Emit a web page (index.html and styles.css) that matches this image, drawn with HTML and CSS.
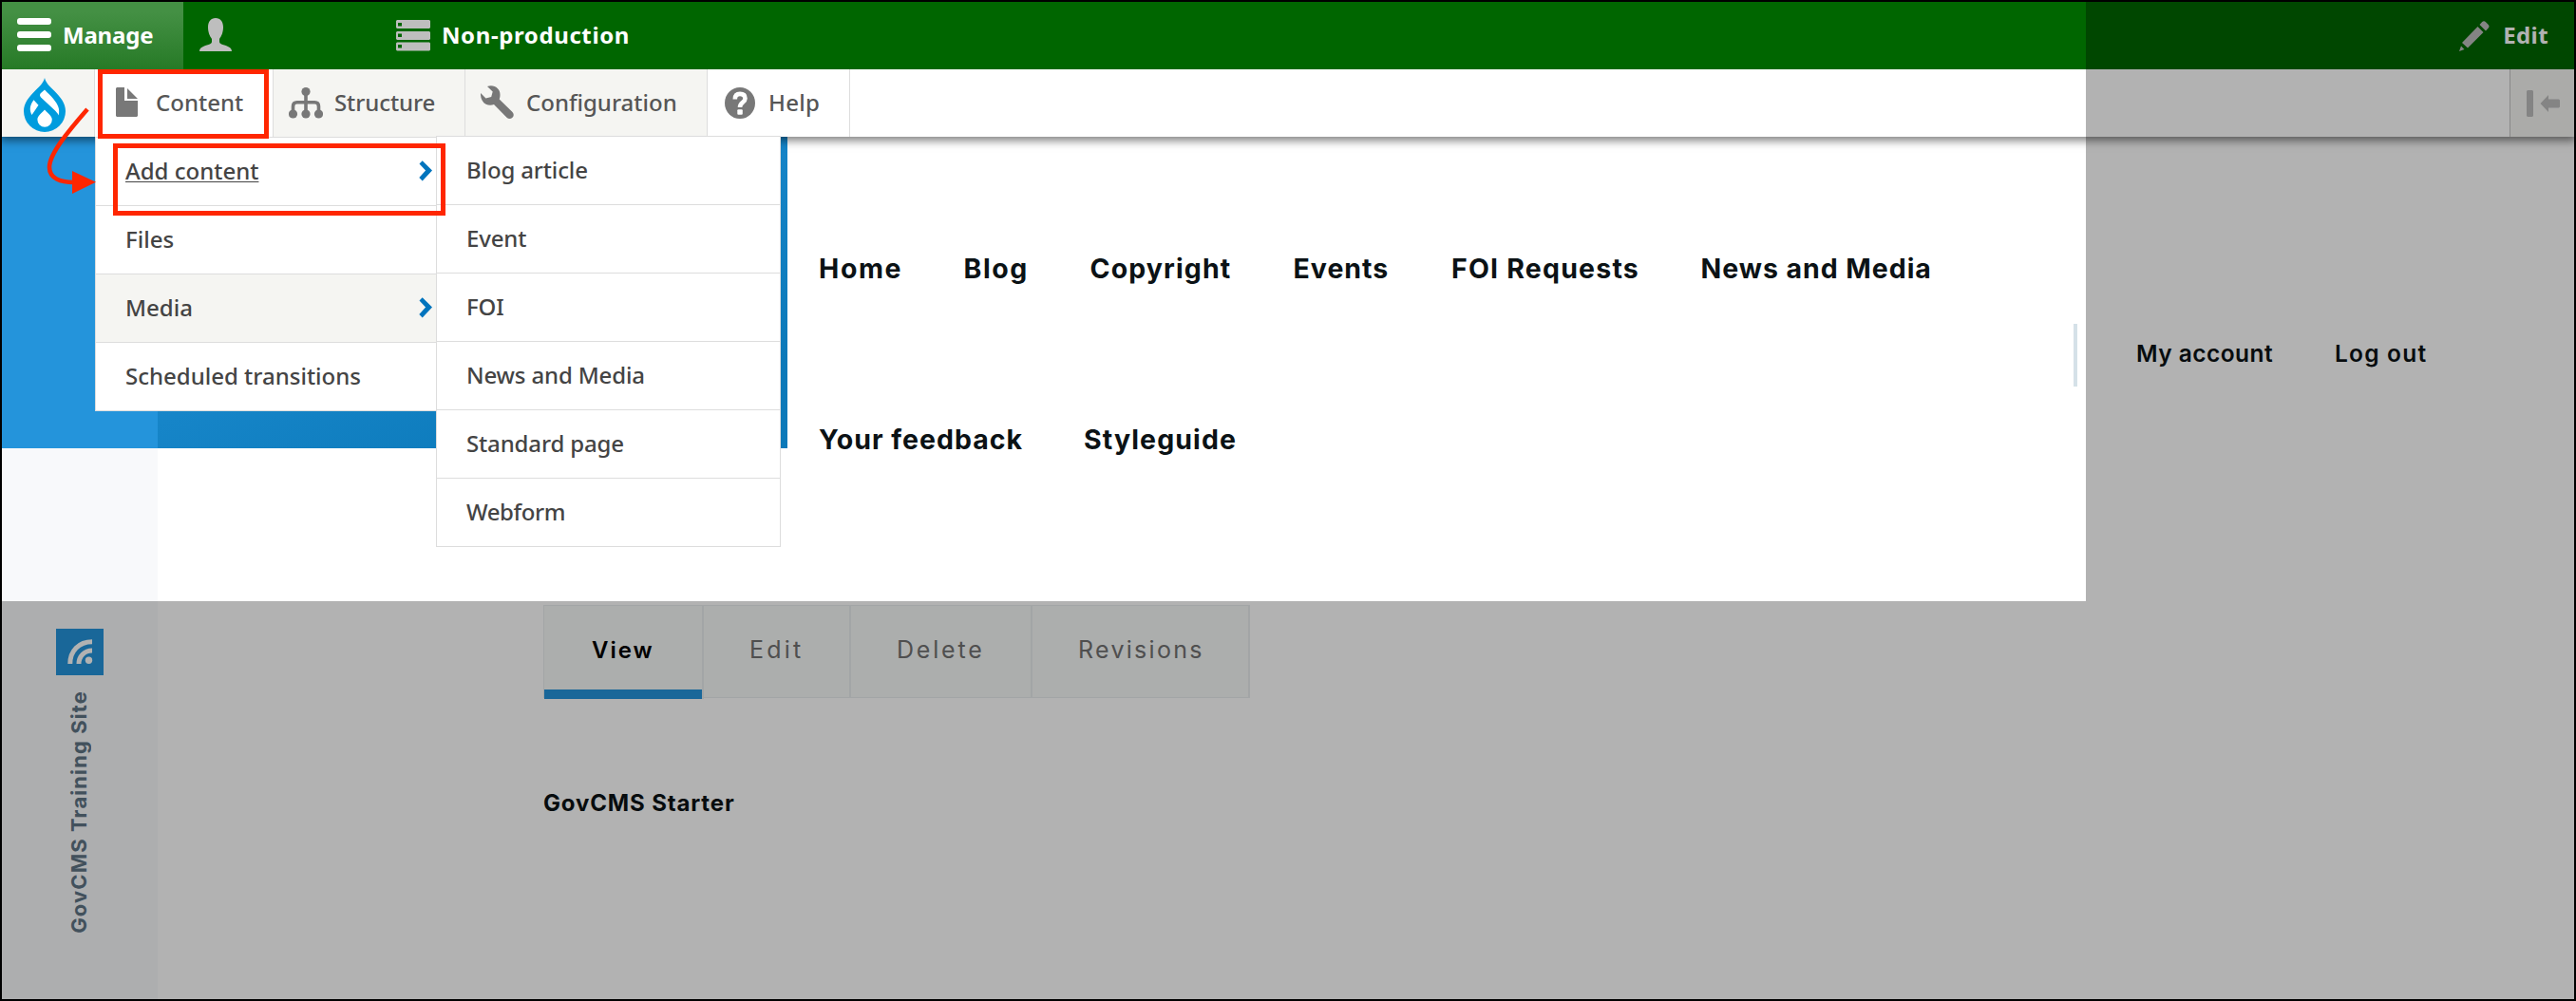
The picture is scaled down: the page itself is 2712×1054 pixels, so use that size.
FILE: index.html
```html
<!DOCTYPE html>
<html lang="en">
<head>
<meta charset="utf-8">
<title>GovCMS Training Site</title>
<link rel="stylesheet" href="styles.css">
</head>
<body>
<div class="frame">
  <header class="toolbar">
    <div class="bar">
      <a class="bar-manage">
        <svg width="36" height="36" viewBox="0 0 36 36"><g fill="#fff"><rect width="36" height="7" rx="3"/><rect y="14" width="36" height="7" rx="3"/><rect y="28" width="36" height="7" rx="3"/></g></svg>
        <span>Manage</span>
      </a>
      <a class="bar-user"><svg width="34" height="35" viewBox="0 0 34 35"><path fill="#bebebe" d="M17 0c5.200 0 8 4 8 9.500 0 6-2 9.500-4 12.500v3c0 1.600 1.500 2.300 3.500 3 4.500 1.500 9.500 2.500 9.500 7H0c0-4.500 5-5.500 9.500-7 2-.7 3.500-1.400 3.500-3v-3c-2-3-4-6.500-4-12.500C9 4 11.800 0 17 0z"/></svg></a>
      <a class="bar-env">
        <svg width="36" height="33" viewBox="0 0 36 33"><path fill="#bebebe" fill-rule="evenodd" d="M1 0h34l1 1v7l-1 1H1L0 8V1zM2 3v3.500h4V3zM1 12h34l1 1v7l-1 1H1l-1-1v-7zM2 14.500V18h4v-3.500zM1 23.500h34l1 1v7l-1 1H1l-1-1v-7zM2 26v3.500h4V26z"/></svg>
        <span>Non-production</span>
      </a>
      <a class="bar-edit">
        <svg width="32" height="32" viewBox="0 0 32 32"><path fill="#bebebe" d="M0 32l2-5.500L5.500 30zM3 23L19.500 6l6 6L9 28.500zM21.500 4L24 1.200q2-2 4 0l2.500 2.600q2 2 0 4L28 10.500z"/></svg>
        <span>Edit</span>
      </a>
    </div>
    <nav class="tray">
      <a class="tab tab-home"><svg width="44" height="57" viewBox="0 0 44 57"><path fill="#009cde" d="M22 0c-1.500 6-6 9.500-10 13.500C5.500 20 0 26.500 0 35a22 22 0 0 0 44 0c0-8.500-5.500-15-12-21.500C28 9.500 23.500 6 22 0z"/><g fill="#fff"><path d="M22 12.500c3 3.500 6.500 6 9.500 10 4 5 7 10 5.200 17-1-2.300-2.500-4-4.700-6L18 20.500q-2-2.500 0-4.500z"/><path d="M10.500 23.300l5 5.500-7 10.200C5.500 34 6.500 28.500 10.500 23.300z"/><path d="M22 33.500c3.500 4 7.800 6.300 7.800 10.500a7.700 7.700 0 0 1-15.400 0c0-4.200 4.100-6.500 7.600-10.500z"/></g></svg></a>
      <a class="tab tab-content"><svg width="23" height="31" viewBox="0 0 23 31"><path fill="#787878" d="M1 0h8v14h14v16l-1 1H1l-1-1V1zM12 1l11 11H12z"/></svg><span>Content</span></a>
      <a class="tab tab-structure"><svg width="36" height="33" viewBox="0 0 36 33"><g fill="#787878"><circle cx="18" cy="4.600" r="4.600"/><circle cx="4.500" cy="28" r="4.600"/><circle cx="18" cy="28" r="4.600"/><circle cx="31.500" cy="28" r="4.600"/></g><path fill="none" stroke="#787878" stroke-width="3.600" d="M18 4v24M4.500 28v-8q0-4.200 4.200-4.200h18.600q4.200 0 4.200 4.200v8"/></svg><span>Structure</span></a>
      <a class="tab tab-config"><svg width="35" height="36" viewBox="0 0 35 36"><path fill="#787878" d="M7 1c7-2.500 13.500 2 13.500 8.500 0 2-.2 3.500-.8 5L33.500 28q2.500 3 0 5.800-3 2.500-6 0L14 20C8 22.500-.5 19 0 8l5.500 5.500 5.700-1.500 1.500-5.500z"/></svg><span>Configuration</span></a>
      <a class="tab tab-help"><svg width="32" height="33" viewBox="0 0 32 33"><ellipse cx="16" cy="16.500" rx="16" ry="16.500" fill="#787878"/><path fill="none" stroke="#fff" stroke-width="4.600" d="M10.800 12.500c0-3.800 2-5.600 5.200-5.600 3.500 0 5.500 1.800 5.500 4.800 0 4.300-5.500 4-5.500 9.300"/><rect x="13.300" y="23.300" width="5.500" height="5.500" rx="1" fill="#fff"/></svg><span>Help</span></a>
      <a class="tab tab-orient"><svg width="36" height="28" viewBox="0 0 36 28"><path fill="#bebebe" d="M1 0h5l1 1v26l-1 1H1l-1-1V1zM14.500 14l8.500-9v4.500h11l1 1v7l-1 1H23V23z"/></svg></a>
    </nav>
  </header>

  <div class="page">
    <aside class="sidebar">
      <div class="sidebar-top"></div>
      <div class="sidebar-body">
        <div class="rss"><svg width="27" height="27" viewBox="0 0 27 27"><g fill="none" stroke="#fff"><path stroke-width="5" d="M2.800 26C2.800 12.500 12 2.800 26 2.800"/><path stroke-width="5" d="M12 26c0-8 6-14 14-14"/></g><circle cx="22.500" cy="22.300" r="3.700" fill="#fff"/></svg></div>
        <div class="site-name">GovCMS Training Site</div>
      </div>
    </aside>
    <main class="main">
      <div class="masthead">
        <div class="brand"></div>
        <nav class="nav">
          <a class="n-home">Home</a><a class="n-blog">Blog</a><a class="n-copyright">Copyright</a><a class="n-events">Events</a><a class="n-foi">FOI Requests</a><a class="n-news">News and Media</a><a class="n-feedback">Your feedback</a><a class="n-style">Styleguide</a>
        </nav>
        <div class="account"><a class="my-account">My account</a><a class="log-out">Log out</a></div>
      </div>
      <div class="tabs"><a class="t-view">View</a><a class="t-edit">Edit</a><a class="t-delete">Delete</a><a class="t-revisions">Revisions</a></div>
      <h1 class="title">GovCMS Starter</h1>
    </main>
  </div>

  <ul class="menu menu-content">
    <li class="current"><span>Add content</span><svg width="14" height="22" viewBox="0 0 14 22"><path fill="#0074bd" d="M.5 3.500L3.700.3 14 10.500 3.700 21.500.3 18l6.800-7.400z"/></svg></li>
    <li><span>Files</span></li>
    <li class="shaded"><span>Media</span><svg width="14" height="22" viewBox="0 0 14 22"><path fill="#0074bd" d="M.5 3.500L3.700.3 14 10.500 3.700 21.500.3 18l6.800-7.400z"/></svg></li>
    <li><span>Scheduled transitions</span></li>
  </ul>
  <ul class="menu menu-add">
    <li>Blog article</li><li>Event</li><li>FOI</li><li>News and Media</li><li>Standard page</li><li class="m-webform">Webform</li>
  </ul>

  <div class="spotlight"></div>
  <div class="mark mark-content"></div>
  <div class="mark mark-add"></div>
  <svg class="arrow" width="60" height="100" viewBox="0 0 60 100"><path fill="none" stroke="#ff2600" stroke-width="4.600" d="M48 10C28 33 8 57 8 71c0 12 12 16 26 16"/><path fill="#ff2600" d="M32 75l25 11.700L32 99z"/></svg>
</div>
</body>
</html>
```
FILE: styles.css
```css
* { box-sizing: border-box; }
body { margin: 0; background: #000; }
svg { display: block; flex: none; }

.frame {
  position: relative;
  width: 2712px;
  height: 1054px;
  border: 2px solid #000;
  background: #fff;
  overflow: hidden;
  font-family: "Noto Sans", sans-serif;
  font-size: 24px;
}

/* Admin toolbar */
.toolbar { position: relative; z-index: 2; }
.bar {
  position: relative;
  z-index: 1;
  display: flex;
  height: 71px;
  background: #006600;
  color: #fff;
  font-weight: 700;
  line-height: 69px;
}
.bar a { display: flex; }
.bar-manage {
  width: 191px;
  padding-left: 16px;
  gap: 12px;
  background: linear-gradient(#449044 15%, #267a26);
}
.bar-manage span { letter-spacing: -.2px; }
.bar svg { margin-top: 17px; }
.bar-user { padding-left: 17px; width: 222px; }
.bar-env { gap: 12px; letter-spacing: .6px; padding-left: 2px; }
.bar .bar-env svg { margin-top: 19px; }
.bar-edit { margin-left: auto; gap: 14px; padding-right: 27px; letter-spacing: .4px; }
.bar .bar-edit svg { margin-top: 20px; }

.tray {
  display: flex;
  height: 71px;
  background: #fff;
  box-shadow: 0 2px 9px 2px rgba(0, 0, 0, .5);
  color: #565656;
  font-weight: 500;
  line-height: 70px;
}
.tab { display: flex; align-items: flex-start; border-right: 1px solid #ddd; background: #f5f5f2; }
.tab-home { width: 98px; padding: 9px 0 0 23px; }
.tab-content { width: 188px; padding-left: 22px; gap: 19px; background: #fff; }
.tab-content svg { margin-top: 19px; }
.tab-structure { width: 202px; padding-left: 16px; gap: 12px; }
.tab-structure span { letter-spacing: -.1px; }
.tab-structure svg { margin-top: 19px; }
.tab-config { width: 255px; padding-left: 16px; gap: 13px; }
.tab-config svg { margin-top: 17px; }
.tab-help { width: 150px; padding-left: 18px; gap: 14px; background: #fff; letter-spacing: .3px; }
.tab-help svg { margin-top: 19px; }
.tab-orient { margin-left: auto; width: 68px; border-right: 0; border-left: 1px solid #c4c4c4; padding: 22px 0 0 17px; }

/* Page */
.page { display: flex; height: 908px; font-family: "Inter", sans-serif; color: #0b1215; }
.sidebar { width: 164px; background: #f8f9fb; }
.sidebar-top { height: 328px; background: #2494db; }
.sidebar-body { display: flex; flex-direction: column; align-items: flex-start; padding: 190px 0 0 57px; }
.rss { width: 50px; height: 49px; background: #2494db; padding: 11px 0 0 12px; }
.site-name {
  margin: 16px 0 0 9px;
  writing-mode: vertical-rl;
  transform: rotate(180deg);
  font-size: 22px;
  line-height: 30px;
  font-weight: 700;
  letter-spacing: 1.1px;
  color: #5f7485;
}
.main { flex: 1; }
.masthead { display: flex; align-items: flex-start; height: 493px; }
.brand { width: 663px; height: 328px; background: linear-gradient(155deg, #2494db, #0b79b9 85%); }
.nav {
  display: flex;
  flex-wrap: wrap;
  width: 1358px;
  margin: 49px 0 0 32px;
  padding-left: 1px;
  font-size: 28.5px;
  font-weight: 700;
  line-height: 180px;
  white-space: nowrap;
}
.n-home { width: 152.5px; letter-spacing: 1.6px; }
.n-blog { width: 133px; letter-spacing: 1.6px; }
.n-copyright { width: 214px; letter-spacing: 1.1px; }
.n-events { width: 166.5px; letter-spacing: 1px; }
.n-foi { width: 262.5px; letter-spacing: 1.2px; }
.n-news { width: 428px; letter-spacing: .95px; }
.n-feedback { width: 279px; letter-spacing: 1px; }
.n-style { letter-spacing: 1.1px; }
.account {
  display: flex;
  margin: 197px 0 0 -36px;
  height: 66px;
  padding-left: 62px;
  border-left: 4px solid #d5e1e8;
  font-size: 24.5px;
  font-weight: 600;
  line-height: 62px;
}
.my-account { width: 209px; letter-spacing: .45px; }
.log-out { letter-spacing: 1.2px; }
.tabs {
  display: flex;
  width: 744px;
  height: 98px;
  margin-left: 406px;
  border: 1px solid #e8ecee;
  border-right: 0;
  background: #f7f9f8;
  font-size: 25px;
  line-height: 93px;
  color: #727272;
}
.tabs a { border-right: 2px solid #e8ecee; padding-left: 48px; }
.tabs .t-view {
  width: 168px;
  height: 98px;
  padding-left: 50px;
  background: linear-gradient(#2494db, #2494db) left bottom / 166px 10px no-repeat;
  font-size: 24px;
  font-weight: 600;
  letter-spacing: 2px;
  color: #000;
}
.tabs .t-edit { width: 155px; letter-spacing: 3.2px; }
.tabs .t-delete { width: 191px; letter-spacing: 2.8px; }
.tabs .t-revisions { flex: 1; letter-spacing: 2.3px; }
.title { margin: 91px 0 0 406px; font-size: 24px; line-height: 40px; font-weight: 700; letter-spacing: .85px; }

/* Drop-down menus */
.menu {
  position: absolute;
  z-index: 3;
  margin: 0;
  padding: 0;
  list-style: none;
  background: #fff;
  border: 1px solid #ddd;
  color: #444;
  font-weight: 500;
  line-height: 68px;
}
.menu li { display: flex; align-items: center; height: 72px; padding: 0 0 2px 31px; border-bottom: 1px solid #ddd; }
.menu li:last-child { height: 71px; border-bottom: 0; }
.menu-content { left: 98px; top: 142px; width: 360px; }
.menu-content svg { margin: 1px 4px 0 auto; }
.menu .shaded { background: #f5f5f2; }
.current span { text-decoration: underline; text-decoration-thickness: 1px; text-underline-offset: 2px; }
.menu-add { left: 457px; top: 141px; width: 363px; letter-spacing: -.15px; }
.menu .m-webform { letter-spacing: -.4px; }

/* Focus area and annotations */
.spotlight { position: absolute; z-index: 4; left: 0; top: 0; width: 2194px; height: 631px; box-shadow: 0 0 0 3000px rgba(0, 0, 0, .3); }
.mark { position: absolute; z-index: 5; border: 5px solid #ff2600; }
.mark-content { left: 101px; top: 71px; width: 180px; height: 73px; }
.mark-add { left: 117px; top: 149px; width: 350px; height: 76px; }
.arrow { position: absolute; z-index: 5; left: 42px; top: 103px; }
```
